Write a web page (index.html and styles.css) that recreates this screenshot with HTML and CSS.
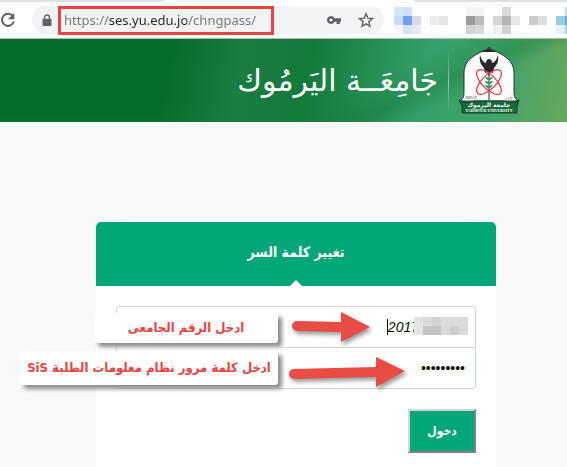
FILE: index.html
```html
<!DOCTYPE html>
<html lang="ar">

<head>
    <meta charset="UTF-8">
    <meta name="viewport" content="width=device-width, initial-scale=1.0">
    <title>تغيير كلمة السر</title>
    <link rel="stylesheet" href="styles.css">
</head>

<body>

    <div class="browser">
        <div class="tabs">
            <span class="tab-left"></span>
            <span class="tab-right"></span>
        </div>
        <div class="toolbar">
            <button class="icon-button" type="button" aria-label="Reload">
                <svg width="16" height="16" viewBox="0 0 16 16">
                    <path d="M12.8 4.2A6 6 0 1 0 13.8 9.5" fill="none" stroke="#5f6368" stroke-width="2" />
                    <path d="M14.3 1v6.2H8.1z" fill="#5f6368" />
                </svg>
            </button>
            <div class="omnibox">
                <svg class="lock" width="10" height="13" viewBox="0 0 10 13">
                    <path d="M2.5 6V3.5a2.5 2.5 0 0 1 5 0V6" fill="none" stroke="#5f6368" stroke-width="1.4" />
                    <rect x="0.5" y="4.8" width="9" height="7.2" rx="1" fill="#5f6368" />
                </svg>
                <input class="url" type="text" aria-label="Address" value="https://ses.yu.edu.jo/chngpass/">
                <button class="icon-button" type="button" aria-label="Passwords">
                    <svg width="16" height="16" viewBox="0 0 16 16">
                        <path d="M1 8a4 4 0 0 1 7.6-1.7H15v3.4h-1.2V12h-3.2V9.7H8.6A4 4 0 0 1 1 8z" fill="#5f6368" />
                        <circle cx="5" cy="8" r="1.6" fill="#f1f3f4" />
                    </svg>
                </button>
                <button class="icon-button" type="button" aria-label="Bookmark">
                    <svg width="16" height="16" viewBox="0 0 16 16">
                        <path d="M8 1.800l1.800 4.300 4.700.4-3.600 3.100 1.100 4.600L8 11.800l-4 2.400 1.100-4.600L1.500 6.500l4.700-.4z" fill="none" stroke="#5f6368" stroke-width="1.4" />
                    </svg>
                </button>
            </div>
            <!-- الإضافات -->
            <svg class="extensions" width="173" height="27" viewBox="0 0 173 27" shape-rendering="crispEdges">
                <path d="M0 0h9v9H0z" fill="#d6e4fc" />
                <path d="M9 0h9v9H9z" fill="#d0e0fb" />
                <path d="M0 9h9v9H0z" fill="#c9dbfa" />
                <path d="M9 9h9v9H9z" fill="#72a0ee" />
                <path d="M18 9h9v9h-9z" fill="#d8dbe2" />
                <path d="M0 18h9v9H0z" fill="#f4f7fd" />
                <path d="M9 18h9v9H9z" fill="#d5e3fb" />
                <path d="M18 18h9v9h-9z" fill="#e7eaf0" />
                <path d="M36 9h9v9h-9z" fill="#ececec" />
                <path d="M45 9h9v9h-9z" fill="#e6e6e6" />
                <path d="M72 0h18v9H72z" fill="#f4f4f4" />
                <path d="M72 9h9v9h-9z" fill="#9c9c9c" />
                <path d="M81 9h9v9h-9z" fill="#bcbcbc" />
                <path d="M72 18h9v9h-9z" fill="#d2d2d2" />
                <path d="M81 18h9v9h-9z" fill="#d9d9d9" />
                <path d="M108 0h9v9h-9z" fill="#dadada" />
                <path d="M99 9h9v9h-9z" fill="#d6d6d6" />
                <path d="M108 9h9v9h-9z" fill="#b5b5b5" />
                <path d="M117 9h9v9h-9z" fill="#e8e8e8" />
                <path d="M99 18h9v9h-9z" fill="#f0f0f0" />
                <path d="M108 18h9v9h-9z" fill="#d2d2d2" />
                <path d="M135 9h9v9h-9z" fill="#cbcbcb" />
                <path d="M144 9h9v9h-9z" fill="#dedede" />
                <path d="M162 9h9v9h-9z" fill="#9ccbe6" />
                <path d="M171 9h2v9h-2z" fill="#62b0dc" />
                <path d="M171 0h2v9h-2z" fill="#bfdff0" />
                <path d="M162 18h9v9h-9z" fill="#e4f1f8" />
                <path d="M171 18h2v9h-2z" fill="#a9d4ea" />
            </svg>
        </div>
    </div>

    <header class="banner">
        <div class="name">جَامِعَــة اليَرمُوك</div>
        <div class="line"></div>
        <svg class="logo" width="62" height="70" viewBox="0 0 62 70">
            <path d="M30 1c2 3 5 3 10 6 10 5 15 11 15 20v19c0 5 1 7 4 9H1c3-2 4-4 4-9V27C5 18 10 12 20 7c5-3 8-3 10-6z" fill="#fff" stroke="#24372c" stroke-width="1" />
            <path d="M30 1c1 3 4 3 8 5H22c4-2 7-2 8-5z" fill="#24272a" />
            <path d="M21 9c1 4 3 7 6 8 0-2 1-4 3-4s3 2 3 4c3-1 5-4 6-8 1 6-1 10-4 13l-1 5-3-1-1 5-1-5-3 1-1-5c-3-3-5-7-4-13z" fill="#25272a" />
            <path d="M30 28v26" stroke="#25272a" stroke-width="1" />
            <g fill="none" stroke="#e0363c" stroke-width="1.2">
                <ellipse cx="30" cy="36" rx="7" ry="16" transform="rotate(45 30 36)" />
                <ellipse cx="30" cy="36" rx="7" ry="16" transform="rotate(-45 30 36)" />
            </g>
            <g fill="#249451">
                <path d="M30 34c-3 0-3-2-4-3 3 0 4 1 4 3z" />
                <path d="M30 34c3 0 3-2 4-3-3 0-4 1-4 3z" />
                <path d="M30 38c-3 0-3-2-4-3 3 0 4 1 4 3z" />
                <path d="M30 38c3 0 3-2 4-3-3 0-4 1-4 3z" />
                <path d="M30 42c-3 0-3-2-4-3 3 0 4 1 4 3z" />
                <path d="M30 42c3 0 3-2 4-3-3 0-4 1-4 3z" />
            </g>
            <path d="M0 54c6 3 10 3 15 1h30c5 2 9 2 15-1l-2 6v7H3v-7z" fill="#166b3b" stroke="#123d27" stroke-width="1" />
            <text class="logo-small" x="6" y="53">JORDAN</text>
            <text class="logo-small" x="46" y="53">الأردن</text>
            <text class="logo-ar" x="30" y="61" text-anchor="middle">جامعة اليرموك</text>
            <text class="logo-en" x="30" y="66" text-anchor="middle">YARMOUK UNIVERSITY</text>
        </svg>
    </header>

    <main class="page">
        <form class="card" dir="rtl">
            <h1 class="card-title">تغيير كلمة السر</h1>
            <div class="card-body">
                <div class="fields">
                    <div class="field">
                        <input class="user" id="user" type="text" value="2017">
                        <span class="caret"></span>
                        <svg class="mask" width="54" height="18" viewBox="0 0 54 18" shape-rendering="crispEdges">
                            <path d="M0 0h54v18H0z" fill="#dadada" />
                            <path d="M0 0h9v18H0z" fill="#e4e4e4" />
                            <path d="M18 0h9v9h-9z" fill="#d3d3d3" />
                            <path d="M9 9h18v9H9z" fill="#c4c4c4" />
                            <path d="M36 9h9v9h-9z" fill="#cecece" />
                        </svg>
                        <label class="note note-user" for="user">ادخل الرقم الجامعى</label>
                        <svg class="arrow arrow-user" width="80" height="32" viewBox="0 0 80 32">
                            <path d="M6 10l44 1V1l29 15-29 15V21L6 20a5 5 0 0 1 0-10z" fill="#e84c45" />
                        </svg>
                    </div>
                    <div class="field">
                        <input class="pass" id="pass" type="password" value="123456789">
                        <label class="note note-pass" for="pass">ادخل كلمة مرور نظام معلومات الطلبة SiS</label>
                        <svg class="arrow arrow-pass" width="118" height="32" viewBox="0 0 118 32">
                            <path d="M6 13l82-2V1l29 14-29 16V21L6 23a5 5 0 0 1 0-10z" fill="#e84c45" />
                        </svg>
                    </div>
                </div>
                <button class="login" type="submit">دخول</button>
            </div>
        </form>
    </main>

</body>

</html>
```

FILE: styles.css
```css
* {
    box-sizing: border-box;
    margin: 0;
    padding: 0;
}

body {
    display: flex;
    flex-direction: column;
    min-height: 100vh;
    overflow-x: hidden;
    background-color: #f9f9f9;
    font-family: "Liberation Sans", "DejaVu Sans", sans-serif;
}

/* شريط المتصفح */
.browser {
    background-color: #fff;
    border-bottom: 1px solid #b5b5b5;
}

.tabs {
    display: flex;
    justify-content: space-between;
    height: 2px;
}

.tab-left {
    width: 29%;
    background-color: #dee1e6;
    border-radius: 0 0 4px 0;
}

.tab-right {
    width: 27%;
    background-color: #dee1e6;
    border-radius: 0 0 0 4px;
}

.toolbar {
    display: flex;
    align-items: center;
    height: 36px;
}

.icon-button {
    display: flex;
    border: none;
    background: none;
    cursor: pointer;
}

.omnibox {
    display: flex;
    flex: 1;
    align-items: center;
    gap: 16px;
    height: 28px;
    margin-left: 16px;
    padding: 0 10px;
    border-radius: 14px;
    background-color: #f1f3f4;
}

.lock {
    margin-right: -10px;
}

.url {
    width: 216px;
    height: 29px;
    margin-right: auto;
    padding: 0 3px;
    border: 3px solid #e8443f;
    outline: none;
    background: linear-gradient(to right, #70757a 45px, #202124 45px, #202124 123px, #70757a 123px) content-box text;
    color: transparent;
    font-family: "Noto Sans", sans-serif;
    font-size: 13px;
}

.extensions {
    margin-left: 10px;
}

/* الترويسة */
.banner {
    display: flex;
    align-items: center;
    justify-content: flex-end;
    gap: 10px;
    height: 83px;
    padding-right: 46px;
    background:
        linear-gradient(155deg, transparent 62%, rgba(10, 110, 50, .3) 72%, transparent 78%),
        linear-gradient(100deg, #076d2c 30%, #1b7c42 42%, #137a3a 54%, #36a06a 74%, #3fa269 86%, #65a75c 100%);
}

.name {
    color: #fff;
    direction: rtl;
    font-family: "DejaVu Sans", sans-serif;
    font-size: 30px;
    line-height: 40px;
    white-space: nowrap;
}

.line {
    width: 1px;
    height: 60px;
    background: linear-gradient(transparent, #8fcfad, transparent);
}

.logo-small,
.logo-ar,
.logo-en {
    font-family: "Liberation Serif", "DejaVu Sans", serif;
}

.logo-small {
    fill: #25372c;
    font-size: 3px;
}

.logo-ar {
    fill: #fff;
    font-family: "DejaVu Sans", sans-serif;
    font-size: 6px;
    font-weight: bold;
}

.logo-en {
    fill: #fff;
    font-size: 4px;
    font-weight: bold;
}

/* النموذج */
.page {
    display: flex;
    flex: 1;
    justify-content: center;
    padding: 100px 0 0 25px;
}

.card {
    display: flex;
    flex-direction: column;
    width: 100%;
    max-width: 400px;
}

.card-title {
    position: relative;
    height: 64px;
    border-radius: 5px 5px 0 0;
    background-color: #03a678;
    color: #fff;
    font-family: "DejaVu Sans Condensed", "DejaVu Sans", sans-serif;
    font-size: 14px;
    line-height: 60px;
    text-align: center;
}

.card-title::after {
    content: "";
    position: absolute;
    bottom: 0;
    left: 50%;
    border: 6px solid transparent;
    border-top: none;
    border-bottom-color: #fff;
    transform: translateX(-50%);
}

.card-body {
    flex: 1;
    padding: 20px 20px 14px;
    background-color: #fff;
}

.fields {
    margin-bottom: 20px;
    border: 1px solid #d4d4d4;
    border-radius: 3px;
}

.field {
    position: relative;
}

.field + .field {
    border-top: 1px solid #d4d4d4;
}

.field input {
    display: block;
    width: 100%;
    height: 40px;
    border: none;
    outline: none;
    background: none;
    color: #111;
    font-family: "Liberation Sans", sans-serif;
}

.field .user {
    padding: 0 56px 0 0;
    font-size: 14px;
    font-style: italic;
}

.field .pass {
    padding: 0 10px;
    font-size: 14px;
}

.caret {
    position: absolute;
    top: 12px;
    right: 87px;
    width: 1px;
    height: 16px;
    background-color: #000;
}

.mask {
    position: absolute;
    top: 10px;
    right: 7px;
}

/* الملاحظات والأسهم */
.note {
    position: absolute;
    right: 197px;
    border-radius: 3px;
    background-color: #fff;
    box-shadow: 4px 4px 4px #8c8c8c;
    color: #e8443f;
    font-family: "DejaVu Sans Condensed", "DejaVu Sans", sans-serif;
    font-size: 13px;
    font-weight: bold;
    text-align: center;
    white-space: nowrap;
}

.note-user {
    top: 6px;
    width: 184px;
    line-height: 30px;
}

.note-pass {
    top: 3px;
    width: 258px;
    line-height: 34px;
}

.arrow {
    position: absolute;
    filter: drop-shadow(2px 3px 2px rgba(0, 0, 0, .4));
}

.arrow-user {
    top: 4px;
    right: 104px;
}

.arrow-pass {
    top: 8px;
    right: 69px;
}

.login {
    display: block;
    width: 68px;
    height: 44px;
    border: 2px outset #d4d4d4;
    background-color: #03a678;
    color: #fff;
    font-family: "DejaVu Sans Condensed", "DejaVu Sans", sans-serif;
    font-size: 12px;
    font-weight: bold;
    cursor: pointer;
}
```
